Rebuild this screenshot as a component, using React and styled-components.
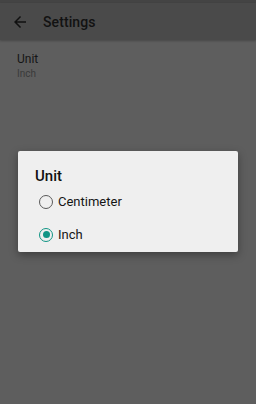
import React from "react";
import styled, { createGlobalStyle } from "styled-components";

const Global = createGlobalStyle`
  html, body { margin: 0; padding: 0; }
  body { font-family: Roboto, "Noto Sans", sans-serif; background: #5e5e5e; }
  #root { width: 256px; height: 404px; }
`;

const Screen = styled.div`
  position: relative;
  width: 256px;
  height: 404px;
  background: #5e5e5e;
  overflow: hidden;
  display: flex;
  flex-direction: column;
`;

const StatusBar = styled.div`
  height: 3px;
  background: #444444;
`;

const Toolbar = styled.div`
  height: 37px;
  background: #4a4a4a;
  display: flex;
  align-items: center;
  padding-left: 11px;
  gap: 14px;
  box-shadow: 0 1px 2px rgba(0,0,0,0.25);
`;

const Title = styled.div`
  font-size: 14px;
  font-weight: 500;
  color: #121212;
  letter-spacing: 0.1px;
`;

const Pref = styled.div`
  padding: 12px 17px;
  display: flex;
  flex-direction: column;
  gap: 2px;
`;

const PrefTitle = styled.div`
  font-size: 12px;
  color: #151515;
`;

const PrefSummary = styled.div`
  font-size: 10px;
  color: #3a3a3a;
`;

const Dialog = styled.div`
  position: absolute;
  left: 18px;
  top: 151px;
  width: 220px;
  height: 101px;
  background: #efefef;
  border-radius: 2px;
  box-shadow: 0 3px 8px rgba(0,0,0,0.35);
  box-sizing: border-box;
  padding: 16px 0 0 17px;
  display: flex;
  flex-direction: column;
`;

const DialogTitle = styled.div`
  font-size: 15px;
  line-height: 18px;
  font-weight: 500;
  color: #111;
`;

const Option = styled.div`
  display: flex;
  align-items: center;
  height: 33px;
  gap: 5px;
  padding-left: 4px;
  font-size: 13px;
  color: #151515;
`;

const Radio = styled.span`
  width: 14px;
  height: 14px;
  box-sizing: border-box;
  border-radius: 50%;
  border: 1.8px solid ${p => (p.$checked ? "#119585" : "#5a5a5a")};
  display: flex;
  align-items: center;
  justify-content: center;
  &::after {
    content: "";
    width: 7px;
    height: 7px;
    border-radius: 50%;
    background: ${p => (p.$checked ? "#119585" : "transparent")};
  }
`;

const BackIcon = () => (
  <svg width="18" height="18" viewBox="0 0 24 24">
    <path d="M20 11H7.83l5.59-5.59L12 4l-8 8 8 8 1.41-1.41L7.83 13H20v-2z" fill="#111" />
  </svg>
);

export default function App() {
  return (
    <>
      <Global />
      <Screen>
        <StatusBar />
        <Toolbar>
          <BackIcon />
          <Title>Settings</Title>
        </Toolbar>
        <Pref>
          <PrefTitle>Unit</PrefTitle>
          <PrefSummary>Inch</PrefSummary>
        </Pref>
        <Dialog>
          <DialogTitle>Unit</DialogTitle>
          <Option>
            <Radio />
            Centimeter
          </Option>
          <Option>
            <Radio $checked />
            Inch
          </Option>
        </Dialog>
      </Screen>
    </>
  );
}
